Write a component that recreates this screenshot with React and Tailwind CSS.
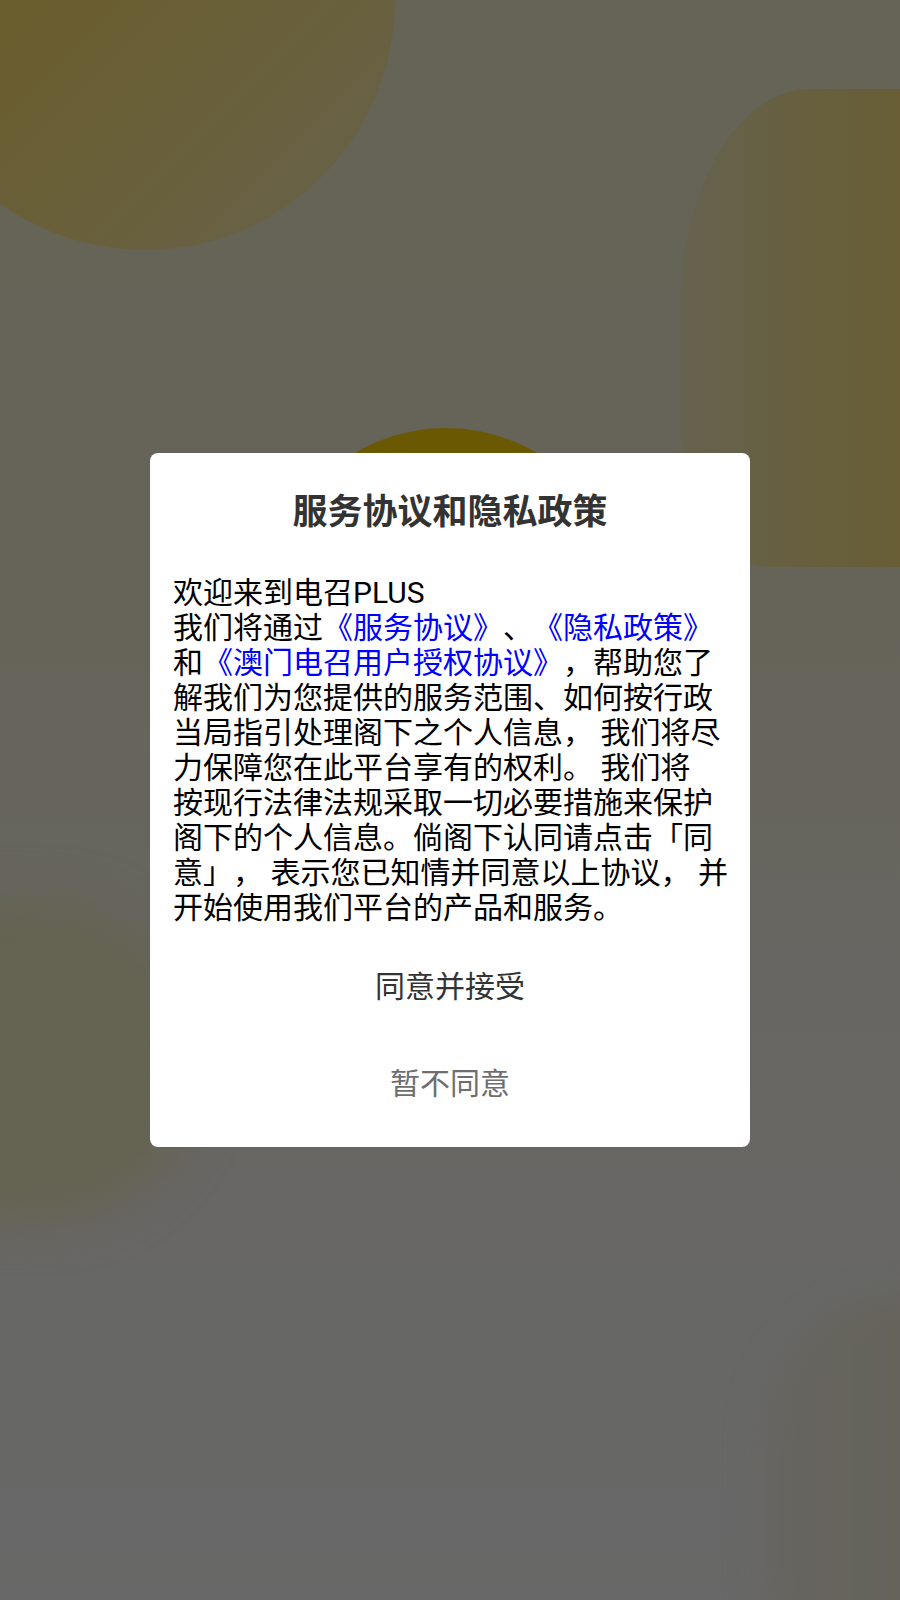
export default function App() {
  return (
    <div className="relative h-[1600px] w-full overflow-hidden bg-[linear-gradient(180deg,#666357_0%,#666459_40%,#676662_62%,#686868_100%)]">
      {/* blurred background art behind the dim overlay */}
      <div className="absolute left-[-105px] top-[-250px] h-[500px] w-[500px] rounded-full bg-[linear-gradient(135deg,#6b5d25_0%,#6a5e30_45%,#67624c_100%)]" />
      <div className="absolute left-[680px] top-[89px] h-[478px] w-[330px] rounded-tl-[130px_220px] rounded-bl-[90px_140px] bg-[linear-gradient(90deg,#66624f_0%,#675f3f_35%,#6a5d2c_100%)]" />
      <div className="absolute left-[268px] top-[428px] h-[356px] w-[356px] rounded-full bg-[#6a5802]" />
      <div className="absolute left-[-220px] top-[900px] h-[320px] w-[420px] rounded-full bg-[#656351] blur-xl" />
      <div className="absolute left-[760px] top-[1300px] h-[420px] w-[300px] rounded-[140px] bg-[linear-gradient(90deg,#666561_0%,#646152_100%)] blur-lg" />

      <div className="relative flex h-full w-full items-center justify-center font-['Roboto','Noto_Sans_CJK_SC',sans-serif] [text-spacing-trim:space-all]">
        <div className="flex w-[600px] flex-col rounded-[8px] bg-white pb-[15px] pt-[35px]">
          <h1 className="text-center text-[35px] font-semibold leading-[50px] text-[#333333]">
            服务协议和隐私政策
          </h1>
          <p className="mt-[37px] whitespace-nowrap px-[23px] text-[30px] leading-[35px] text-black">
            欢迎来到电召PLUS
            <br />
            我们将通过<span className="text-[#0000ff]">《服务协议》</span>、<span className="text-[#0000ff]">《隐私政策》</span>
            <br />
            和<span className="text-[#0000ff]">《澳门电召用户授权协议》</span>，帮助您了
            <br />
            解我们为您提供的服务范围、如何按行政
            <br />
            当局指引处理阁下之个人信息， 我们将尽
            <br />
            力保障您在此平台享有的权利。 我们将
            <br />
            按现行法律法规采取一切必要措施来保护
            <br />
            阁下的个人信息。倘阁下认同请点击「同
            <br />
            意」， 表示您已知情并同意以上协议， 并
            <br />
            开始使用我们平台的产品和服务。
          </p>
          <button className="mt-[13px] flex h-[97px] items-center justify-center text-[30px] text-[#333333]">
            同意并接受
          </button>
          <button className="flex h-[97px] items-center justify-center text-[30px] text-[#6e6e6e]">
            暂不同意
          </button>
        </div>
      </div>
    </div>
  );
}
